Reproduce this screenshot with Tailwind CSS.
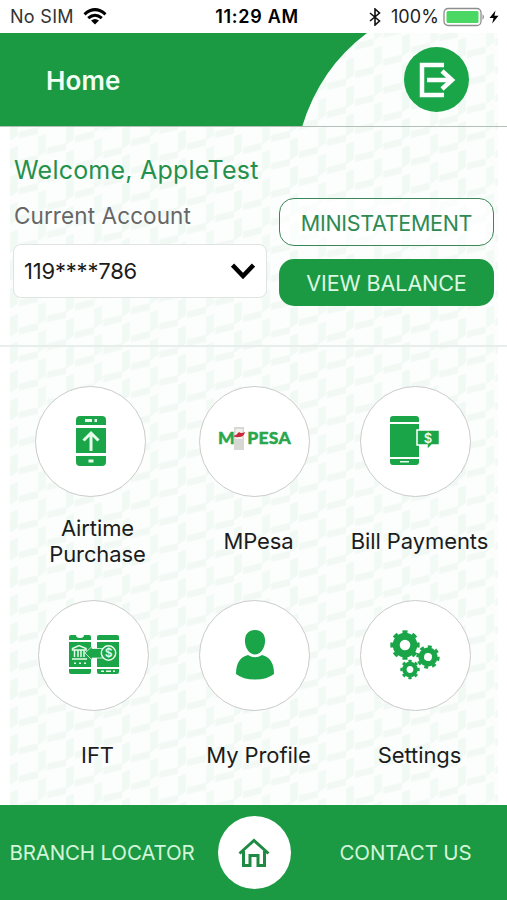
<!DOCTYPE html>
<html lang="en">
<head>
    <meta charset="UTF-8">
    <meta name="viewport" content="width=device-width, initial-scale=1.0">
    <title>Home</title>
    <script src="https://cdn.jsdelivr.net/npm/@tailwindcss/browser@4"></script>
</head>
<body class="bg-white font-['Inter',sans-serif] text-[#1c1c1c]">
    <div class="relative isolate flex h-[900px] w-[507px] flex-col overflow-hidden">

        <!-- Woven background -->
        <svg class="absolute left-[10px] top-[33px] -z-10" width="488" height="772">
            <defs>
                <pattern id="weave" width="56" height="28" patternUnits="userSpaceOnUse" patternTransform="skewY(4)">
                    <path d="M0 4 8 0V18L0 24Z" fill="#f0f9f4"/>
                    <path d="M9 14 28 8V15L9 21Z" fill="#f2f9f5"/>
                    <path d="M28 18 36 14V28H28ZM28 0H36V4L28 10Z" fill="#f2faf5"/>
                    <path d="M37 0 56 -6V1L37 7ZM37 28 56 22V29L37 35Z" fill="#f2f9f5"/>
                </pattern>
            </defs>
            <rect width="488" height="772" fill="#fcfefd"/>
            <rect width="488" height="772" fill="url(#weave)"/>
        </svg>

        <!-- Status bar -->
        <div class="grid h-[33px] shrink-0 grid-cols-3 items-center bg-white text-[18px] leading-none text-black">
            <div class="flex items-center gap-[9px] pl-[10px]">
                <span class="whitespace-nowrap tracking-[0.3px] text-[#333]">No SIM</span>
                <svg width="24" height="17" viewBox="0 0 24 17" fill="none" stroke="#000" stroke-width="3">
                    <path d="M1.5 6.3Q12 -3 22.5 6.3M5.2 10.2Q12 4.2 18.8 10.2"/>
                    <path d="M8 12.5Q12 9.5 16 12.5L12 16.5Z" fill="#000" stroke="none"/>
                </svg>
            </div>
            <span class="whitespace-nowrap pl-[7px] text-center font-semibold tracking-[0.7px]">11:29 AM</span>
            <div class="flex items-center justify-end pr-[7px]">
                <svg class="mr-[10px]" width="12" height="18" viewBox="0 0 12 18" fill="none" stroke="#111" stroke-width="1.6">
                    <path d="M1 5 10.5 13 6 17V1L10.5 5 1 13"/>
                </svg>
                <span class="tracking-[0.1px] text-[#222]">100%</span>
                <svg class="ml-[4px]" width="57" height="20" viewBox="0 0 57 20">
                    <rect x="1" y="1.5" width="37" height="17" rx="4" fill="#fff" stroke="#8a8f8b" stroke-width="1.3"/>
                    <rect x="3.5" y="4" width="32" height="12" rx="1.5" fill="#4bd763"/>
                    <path d="M39.5 7Q42.5 10 39.5 13Z" fill="#8a8f8b"/>
                    <path d="M52.5 3.5 46.5 11H50.5L49.2 16.5 55.5 8.8H51.4Z" fill="#000"/>
                </svg>
            </div>
        </div>

        <!-- Header -->
        <header class="relative flex h-[94px] shrink-0 items-center justify-between border-b border-[#b3c0b8] pl-[46px] pr-[38px]">
            <svg class="absolute left-0 top-0 -z-10" width="507" height="94">
                <path d="M0 0H367Q320 35 302 94H0Z" fill="#1c9a43"/>
            </svg>
            <h1 class="pt-[2px] text-[26px] font-semibold tracking-[0.1px] text-[#f2fff4]">Home</h1>
            <button class="flex size-[65px] items-center justify-center rounded-full bg-[#1aa548]">
                <svg width="38" height="36" viewBox="0 0 38 36" fill="none" stroke="#fff" stroke-width="4.5">
                    <path d="M26 3H4V33H26M9 18H34M24 9 34 18 24 27"/>
                </svg>
            </button>
        </header>

        <!-- Account -->
        <section class="flex h-[220px] shrink-0 flex-col border-b-2 border-[#e8eeec] pl-[14px] pr-[13px] pt-[25px]">
            <h2 class="h-[36px] whitespace-nowrap text-[25px] leading-[36px] tracking-[0.22px] text-[#25904c]">Welcome, AppleTest</h2>
            <div class="flex justify-between">
                <div class="w-[253px] pt-[10px]">
                    <p class="h-[36px] whitespace-nowrap text-[22.5px] leading-[36px] tracking-[0.1px] text-[#666]">Current Account</p>
                    <div class="-ml-px mt-[10px] flex h-[54px] items-center justify-between rounded-lg border-[1.5px] border-[#dfe3e1] bg-white pl-[10px] pr-[11px]">
                        <span class="text-[22px] tracking-[-0.2px]">119****786</span>
                        <svg width="24" height="18" viewBox="0 0 24 18" fill="none" stroke="#000" stroke-width="4.5">
                            <path d="M1.5 3 12 14 22.5 3"/>
                        </svg>
                    </div>
                </div>
                <div class="flex w-[215px] flex-col gap-[13px] pt-[10px]">
                    <button class="h-[48px] whitespace-nowrap rounded-[15px] border-[1.5px] border-[#3c8758] bg-white/60 pt-[2px] text-[21.5px] tracking-[-0.3px] text-[#2f8a52]">MINISTATEMENT</button>
                    <button class="h-[47px] whitespace-nowrap rounded-[15px] bg-[#1c9a43] pt-px text-[21.5px] tracking-[-0.1px] text-[#dcf8e2]">VIEW BALANCE</button>
                </div>
            </div>
        </section>

        <!-- Services -->
        <main class="grid h-[458px] shrink-0 grid-cols-3 grid-rows-[214px_200px] pl-[17px] pr-[7px] pt-[39px] text-center text-[22px] leading-[26px] tracking-[-0.1px]">
            <div class="flex flex-col items-center">
                <div class="mr-[14px] flex size-[111px] items-center justify-center rounded-full border-[1.5px] border-[#cbcbcb] bg-white">
                    <svg class="mb-px" width="30" height="50" viewBox="0 0 30 50" fill="#1aa548">
                        <path d="M0 9V4Q0 0 4 0H26Q30 0 30 4V9ZM0 12H30V37H0ZM0 40H30V46Q30 50 26 50H4Q0 50 0 46Z"/>
                        <path d="M9 3H16V6H9ZM18.5 3H21V6H18.5ZM12.5 43.5H17.5V46.5H12.5Z" fill="#e6fbea"/>
                        <path d="M15 35V18M7.5 24.5 15 17 22.5 24.5" fill="none" stroke="#e6fbea" stroke-width="3"/>
                    </svg>
                </div>
                <p class="mt-[17px] flex h-[54px] items-center">Airtime<br>Purchase</p>
            </div>
            <div class="flex flex-col items-center">
                <div class="mr-[8px] flex size-[111px] items-center justify-center rounded-full border-[1.5px] border-[#cbcbcb] bg-white">
                    <div class="relative mb-[7px] flex w-[73px] justify-between font-['Lato',sans-serif] text-[17.5px] font-black leading-none tracking-[0.3px] text-[#2aa64d] [-webkit-text-stroke:0.4px_#2aa64d]">
                        <span>M</span>
                        <svg class="absolute left-[14px] top-[-4px]" width="14" height="26" viewBox="0 0 14 26">
                            <path d="M2 2H12V25H2Z" fill="#d8d8d2"/>
                            <path d="M3.5 4H10.5V14H3.5Z" fill="#f3f1ef"/>
                            <path d="M1 11Q5 10 7 7Q9 9 13 7Q12 12 7 12Q3 12.5 1 11Z" fill="#c8293a"/>
                        </svg>
                        <span>PESA</span>
                    </div>
                </div>
                <p class="mt-[17px] flex h-[54px] items-center">MPesa</p>
            </div>
            <div class="flex flex-col items-center">
                <div class="mr-[9px] flex size-[111px] items-center justify-center rounded-full border-[1.5px] border-[#cbcbcb] bg-white">
                    <svg class="mb-px" width="50" height="50" viewBox="0 0 50 50" fill="#1aa548">
                        <path d="M0 6V3Q0 0 3 0H26Q29 0 29 3V6ZM0 8H29V41H0ZM0 43H29V46Q29 49 26 49H3Q0 49 0 46Z"/>
                        <path d="M10 45H19V46.5H10Z" fill="#e6fbea"/>
                        <path d="M27 14H49.5V29H42L37 34V29H27Z" stroke="#fff" stroke-width="1.5"/>
                        <text x="38" y="26.5" font-size="13" font-weight="600" text-anchor="middle" fill="#e6fbea">$</text>
                    </svg>
                </div>
                <p class="mt-[17px] flex h-[54px] items-center whitespace-nowrap">Bill Payments</p>
            </div>

            <div class="flex flex-col items-center">
                <div class="mr-[8px] flex size-[111px] items-center justify-center rounded-full border-[1.5px] border-[#cbcbcb] bg-white">
                    <svg class="mb-[2px]" width="50" height="40" viewBox="0 0 50 40" fill="#1aa548">
                        <path d="M0 5V2Q0 0 2 0H20Q22 0 22 2V5ZM0 7H22V32H0ZM0 34H22V37Q22 39 20 39H2Q0 39 0 37ZM28 5V2Q28 0 30 0H48Q50 0 50 2V5ZM28 7H50V32H28ZM28 34H50V37Q50 39 48 39H30Q28 39 28 37Z"/>
                        <path d="M7 0Q7 3 11 3Q15 3 15 0Z" fill="#fff"/>
                        <path d="M5 29V27.5H7V29ZM10 29V27.5H12V29ZM15 29V27.5H17V29ZM32 37V35.5H35V37ZM37 37V35.5H42V37ZM44 37V35.5H46V37Z" fill="#e6fbea"/>
                        <path d="M16 18 23 11.5V13.5H34V23H23V25Z" stroke="#e6fbea" stroke-width="0.8"/>
                        <path d="M3.5 15V13.5L10 10.5 17 13.5V15ZM5.5 15V22M9 15V22M12 15V22M15 15V22M3 24H18" fill="none" stroke="#e6fbea" stroke-width="1.5"/>
                        <circle cx="39.5" cy="18" r="7.2" stroke="#e6fbea" stroke-width="1.5"/>
                        <text x="39.5" y="22.3" font-size="12" font-weight="600" text-anchor="middle" fill="#e6fbea">$</text>
                    </svg>
                </div>
                <p class="mt-[17px] flex h-[54px] items-center">IFT</p>
            </div>
            <div class="flex flex-col items-center">
                <div class="mr-[8px] flex size-[111px] items-center justify-center rounded-full border-[1.5px] border-[#cbcbcb] bg-white">
                    <svg class="mb-px" width="38" height="50" viewBox="0 0 38 50" fill="#1aa548">
                        <path d="M19 0C26 0 29.5 5 29 12C28.5 19 24 24.5 19 24.5C14 24.5 9.5 19 9 12C8.5 5 12 0 19 0Z"/>
                        <path d="M12 25Q19 29.5 26 25C34 27 38 33 38 44Q31 49.5 19 49.5Q7 49.5 0 44C0 33 4 27 12 25Z"/>
                    </svg>
                </div>
                <p class="mt-[17px] flex h-[54px] items-center whitespace-nowrap">My Profile</p>
            </div>
            <div class="flex flex-col items-center">
                <div class="mr-[9px] flex size-[111px] items-center justify-center rounded-full border-[1.5px] border-[#cbcbcb] bg-white">
                    <svg class="mb-px" width="50" height="50" viewBox="0 0 50 50" fill="none" stroke="#1aa548">
                        <!-- each gear: solid ring plus a dashed ring for the teeth -->
                        <g transform="translate(15 15)">
                            <circle r="8.8" stroke-width="7"/>
                            <circle r="13.2" stroke-width="3" pathLength="80" stroke-dasharray="5 5" stroke-dashoffset="2.5"/>
                        </g>
                        <g transform="translate(38 27) rotate(10)">
                            <circle r="6.8" stroke-width="5.6"/>
                            <circle r="10.4" stroke-width="2.6" pathLength="80" stroke-dasharray="5 5" stroke-dashoffset="2.5"/>
                        </g>
                        <g transform="translate(20 39.5)">
                            <circle r="5.6" stroke-width="4.4"/>
                            <circle r="8.5" stroke-width="2.4" pathLength="80" stroke-dasharray="5 5" stroke-dashoffset="2.5"/>
                        </g>
                    </svg>
                </div>
                <p class="mt-[17px] flex h-[54px] items-center">Settings</p>
            </div>
        </main>

        <!-- Bottom bar -->
        <footer class="grid h-[95px] shrink-0 grid-cols-[204px_100px_203px] items-center bg-[#1c9a43] text-center text-[20.5px] tracking-[-0.15px] text-[#d3f5da]">
            <span class="whitespace-nowrap pt-[2px]">BRANCH LOCATOR</span>
            <div class="flex size-[73px] items-center justify-center justify-self-center rounded-full bg-white">
                <svg width="32" height="30" viewBox="0 0 32 30" fill="none" stroke="#1f8a43" stroke-width="3">
                    <path d="M1.5 15.5 16 2.5 30.5 15.5M5.5 13V27.5H12V17.5H20V27.5H26.5V13"/>
                </svg>
            </div>
            <span class="whitespace-nowrap pt-[2px]">CONTACT US</span>
        </footer>
    </div>
</body>
</html>
